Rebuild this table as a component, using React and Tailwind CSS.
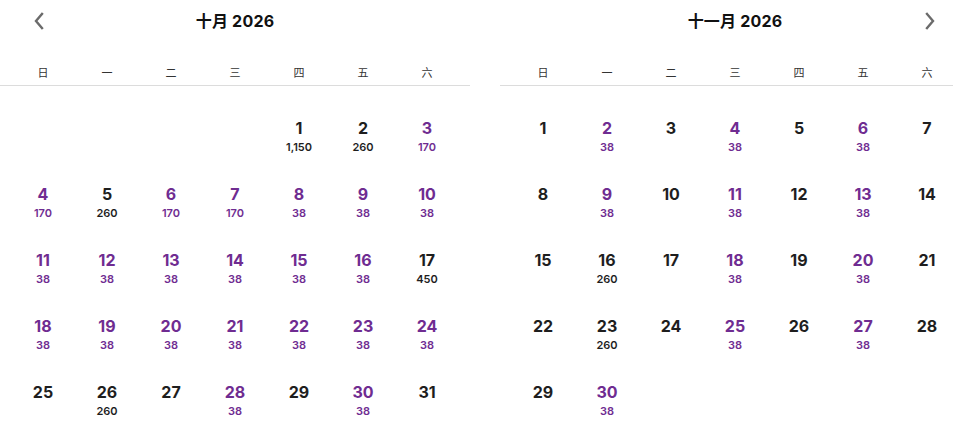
import React from 'react';

const WEEK = ['日', '一', '二', '三', '四', '五', '六'];

// [day, price, highlighted]
const OCT = [
  [1, '1,150', false], [2, '260', false], [3, '170', true],
  [4, '170', true], [5, '260', false], [6, '170', true], [7, '170', true], [8, '38', true], [9, '38', true], [10, '38', true],
  [11, '38', true], [12, '38', true], [13, '38', true], [14, '38', true], [15, '38', true], [16, '38', true], [17, '450', false],
  [18, '38', true], [19, '38', true], [20, '38', true], [21, '38', true], [22, '38', true], [23, '38', true], [24, '38', true],
  [25, null, false], [26, '260', false], [27, null, false], [28, '38', true], [29, null, false], [30, '38', true], [31, null, false],
];

const NOV = [
  [1, null, false], [2, '38', true], [3, null, false], [4, '38', true], [5, null, false], [6, '38', true], [7, null, false],
  [8, null, false], [9, '38', true], [10, null, false], [11, '38', true], [12, null, false], [13, '38', true], [14, null, false],
  [15, null, false], [16, '260', false], [17, null, false], [18, '38', true], [19, null, false], [20, '38', true], [21, null, false],
  [22, null, false], [23, '260', false], [24, null, false], [25, '38', true], [26, null, false], [27, '38', true], [28, null, false],
  [29, null, false], [30, '38', true],
];

const Chevron = ({ dir }) => (
  <svg width="12" height="18" viewBox="0 0 12 18" fill="none">
    <path
      d={dir === 'left' ? 'M9 2 L3 9 L9 16' : 'M3 2 L9 9 L3 16'}
      stroke="#6b6b6b"
      strokeWidth="2.4"
      strokeLinecap="square"
    />
  </svg>
);

const Month = ({ title, days, offset, arrow }) => (
  <div className="w-[470px] shrink-0">
    {/* Header */}
    <div className="relative h-[42px] flex items-center justify-center">
      {arrow === 'left' && (
        <button className="absolute left-[33px] top-[12px]">
          <Chevron dir="left" />
        </button>
      )}
      <h2 className="text-[16px] font-bold text-[#111] leading-5 tracking-[0.2px]">{title}</h2>
      {arrow === 'right' && (
        <button className="absolute right-[34px] top-[12px]">
          <Chevron dir="right" />
        </button>
      )}
    </div>

    {/* Weekdays */}
    <div className="h-[44px] pt-[22px] border-b border-[#dcdcdc] px-[11px] grid grid-cols-7">
      {WEEK.map((w) => (
        <div key={w} className="text-center text-[11px] leading-4 text-[#333] font-['Noto_Sans_CJK_SC',sans-serif]">
          {w}
        </div>
      ))}
    </div>

    {/* Days */}
    <div className="pt-[32px] px-[11px] grid grid-cols-7">
      {Array.from({ length: offset }).map((_, i) => (
        <div key={'e' + i} className="h-[66px]" />
      ))}
      {days.map(([d, price, hot]) => (
        <div key={d} className={`h-[66px] flex flex-col items-center ${hot ? 'text-[#6f2c91]' : 'text-[#1e1e1e]'}`}>
          <span className="text-[16px] font-bold leading-5">{d}</span>
          {price && <span className="mt-[2px] text-[11px] font-semibold leading-[14px]">{price}</span>}
        </div>
      ))}
    </div>
  </div>
);

export default function App() {
  return (
    <div className="w-full h-[441px] bg-white overflow-hidden flex gap-[30px] font-['Inter','Noto_Sans_CJK_SC',sans-serif]">
      <Month title="十月 2026" days={OCT} offset={4} arrow="left" />
      <Month title="十一月 2026" days={NOV} offset={0} arrow="right" />
    </div>
  );
}
